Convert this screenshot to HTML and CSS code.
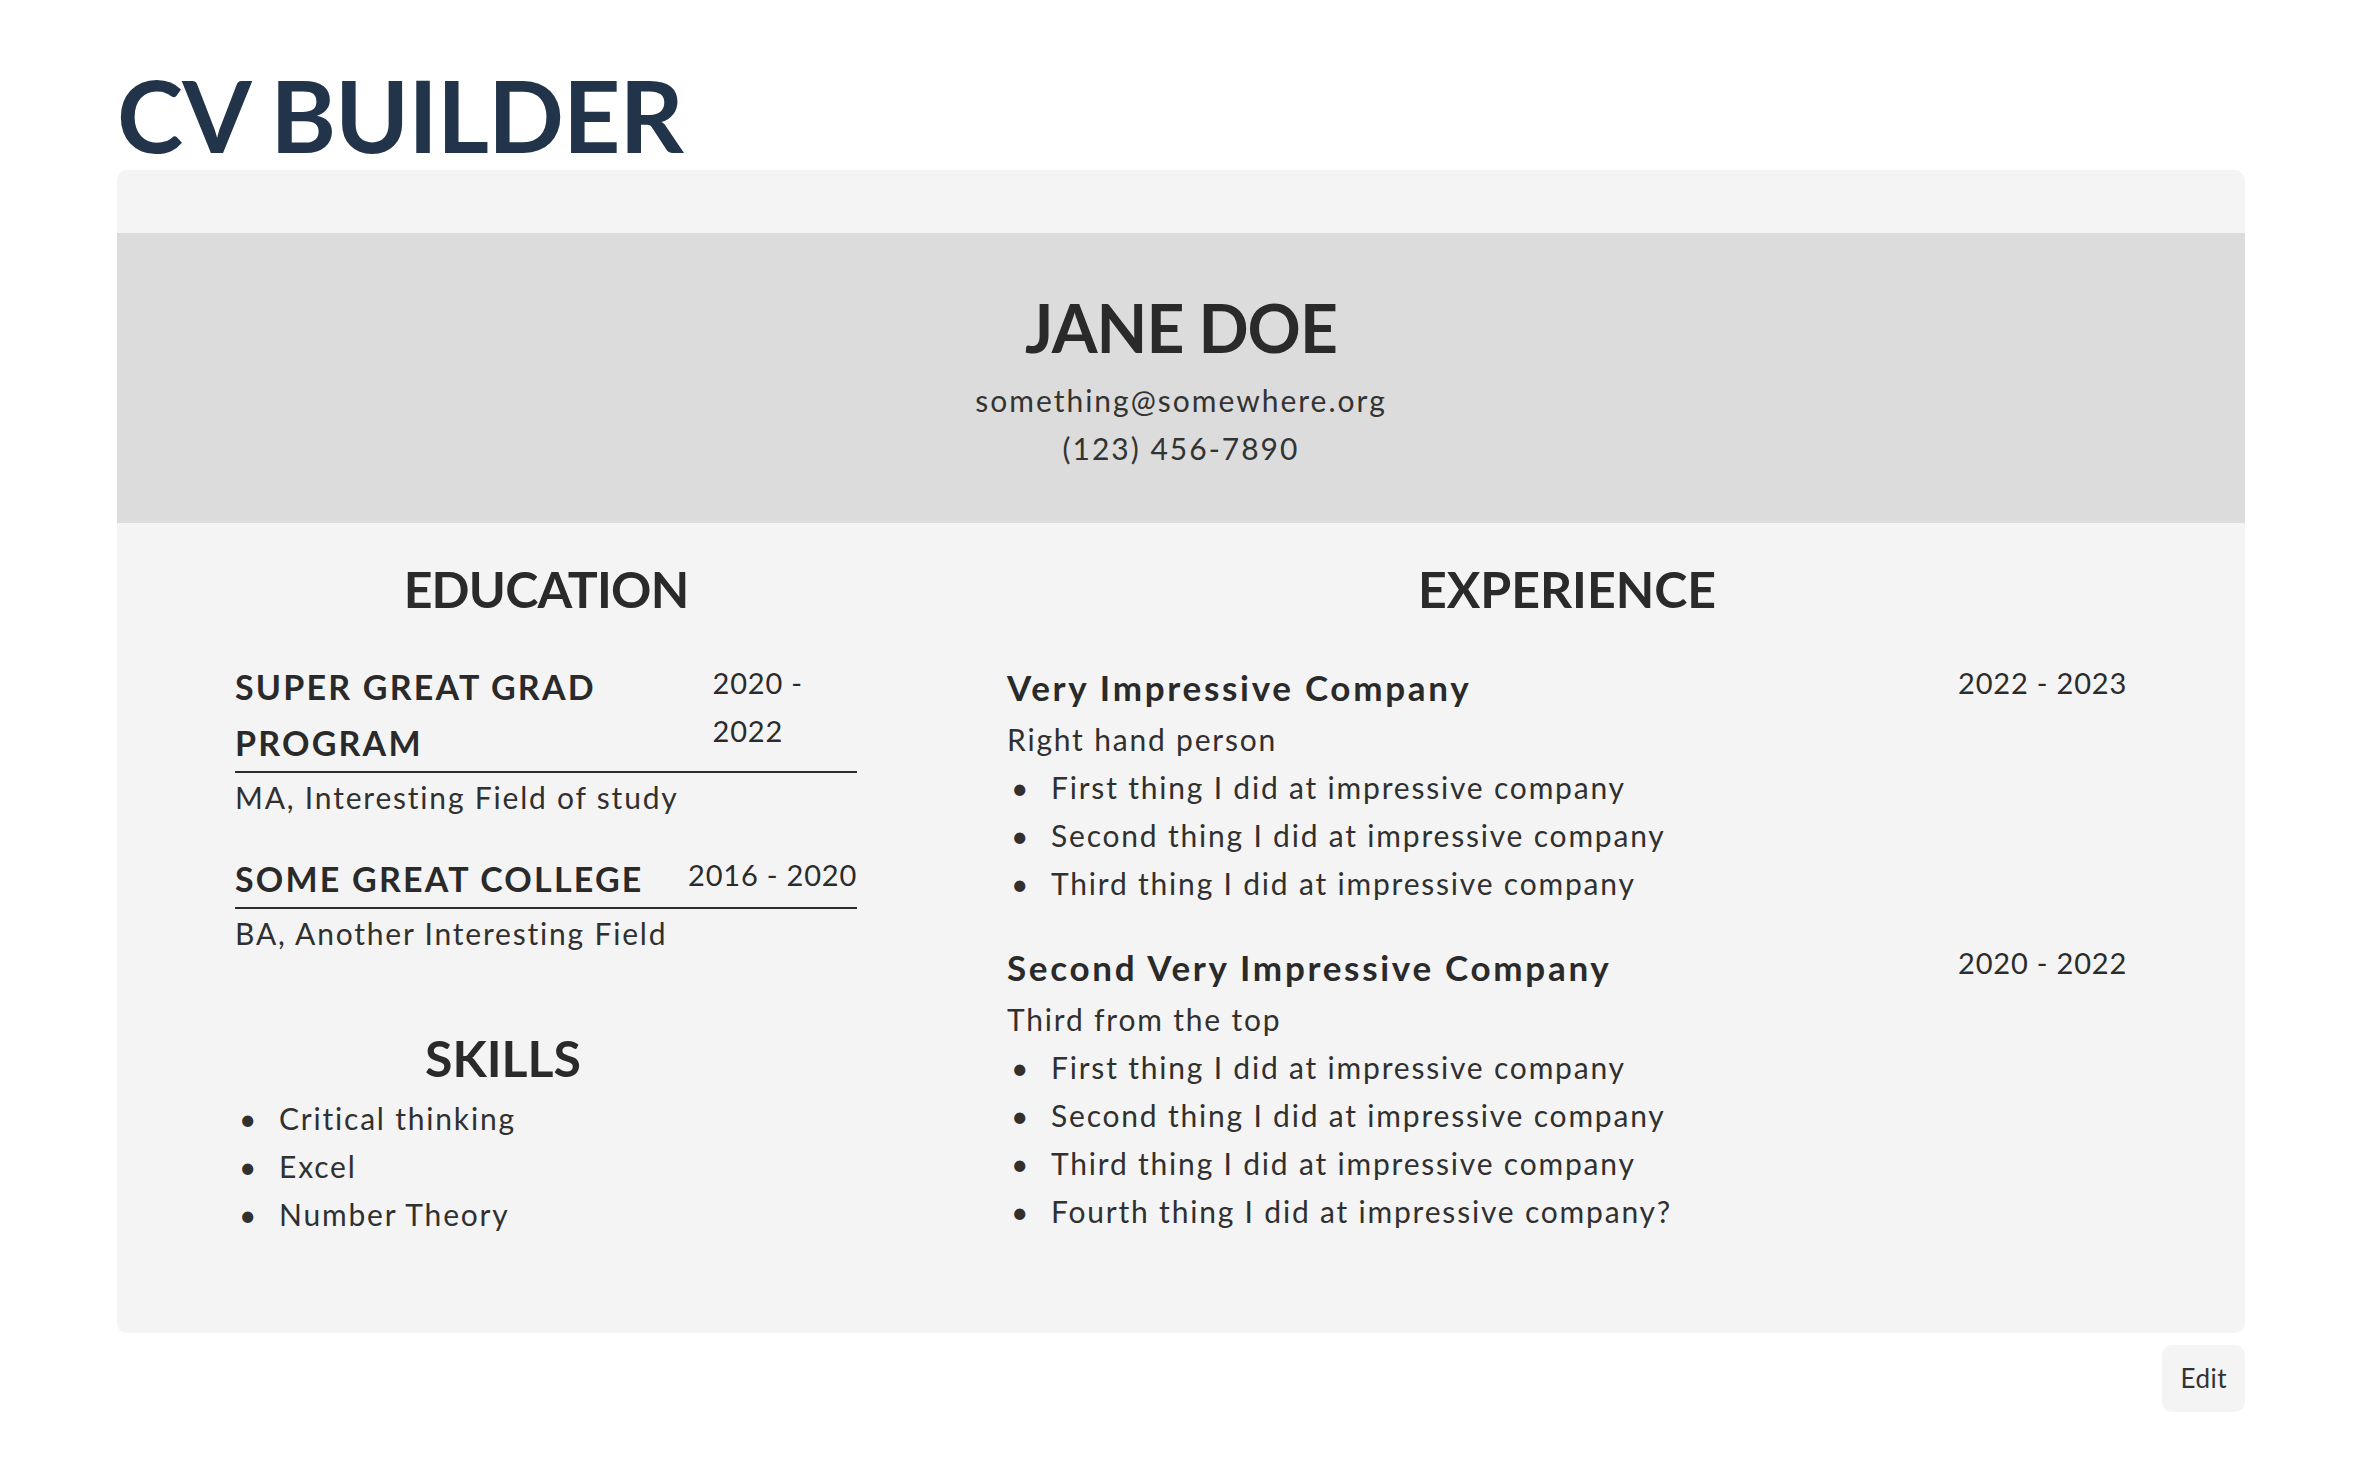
FILE: index.html
```html
<!doctype html>
<html>
<head>
<title>CV Builder</title>
<link rel="stylesheet" href="styles.css">
</head>
<body>
<h1 class="app-title">CV BUILDER</h1>
<div class="cv">
  <div class="cv-head">
    <h2 class="name">JANE DOE</h2>
    <p class="contact first">something@somewhere.org</p>
    <p class="contact">(123) 456-7890</p>
  </div>
  <div class="cv-body">
    <div class="col-left">
      <section class="education">
        <h3 class="sec-title">EDUCATION</h3>
        <div class="entry">
          <div class="entry-top lined">
            <span class="school">SUPER GREAT GRAD PROGRAM</span>
            <span class="dates">2020 - 2022</span>
          </div>
          <div class="sub">MA, Interesting Field of study</div>
        </div>
        <div class="entry next">
          <div class="entry-top lined">
            <span class="school">SOME GREAT COLLEGE</span>
            <span class="dates">2016 - 2020</span>
          </div>
          <div class="sub">BA, Another Interesting Field</div>
        </div>
      </section>
      <section class="skills">
        <h3 class="sec-title">SKILLS</h3>
        <ul class="list">
          <li>Critical thinking</li>
          <li>Excel</li>
          <li>Number Theory</li>
        </ul>
      </section>
    </div>
    <div class="col-right">
      <section class="experience">
        <h3 class="sec-title">EXPERIENCE</h3>
        <div class="entry">
          <div class="entry-top">
            <span class="company">Very Impressive Company</span>
            <span class="dates">2022 - 2023</span>
          </div>
          <div class="sub">Right hand person</div>
          <ul class="list">
            <li>First thing I did at impressive company</li>
            <li>Second thing I did at impressive company</li>
            <li>Third thing I did at impressive company</li>
          </ul>
        </div>
        <div class="entry next-job">
          <div class="entry-top">
            <span class="company">Second Very Impressive Company</span>
            <span class="dates">2020 - 2022</span>
          </div>
          <div class="sub">Third from the top</div>
          <ul class="list">
            <li>First thing I did at impressive company</li>
            <li>Second thing I did at impressive company</li>
            <li>Third thing I did at impressive company</li>
            <li>Fourth thing I did at impressive company?</li>
          </ul>
        </div>
      </section>
    </div>
  </div>
</div>
<div class="actions">
  <button class="edit">Edit</button>
</div>
</body>
</html>
```

FILE: styles.css
```css
body {
  margin: 0;
  padding: 0 117px 40px;
  background: #fff;
  color: #303030;
  font-family: Lato, "Open Sans", sans-serif;
}
.app-title {
  margin: 64px 0 6px;
  font-size: 100px;
  line-height: 1;
  font-weight: 700;
  letter-spacing: -1px;
  color: #22344a;
}
.cv {
  background: #f4f4f4;
  border-radius: 10px;
  padding-top: 63px;
}
.cv-head {
  background: #dcdcdc;
  text-align: center;
  padding: 55px 0 51px;
}
.name {
  margin: 0;
  font-size: 66px;
  line-height: 1.2;
  font-weight: 700;
  letter-spacing: -1px;
  color: #2a2a2a;
}
.contact {
  margin: 0;
  font-size: 30px;
  line-height: 48px;
  letter-spacing: 2px;
  color: #333;
}
.contact.first {
  margin-top: 9px;
}
.cv-body {
  display: grid;
  grid-template-columns: 622px 1fr;
  gap: 150px;
  padding: 36px 118px 95px;
}
.sec-title {
  margin: 0;
  font-size: 50px;
  line-height: 60px;
  font-weight: 700;
  text-align: center;
  color: #2a2a2a;
}
.education .sec-title {
  letter-spacing: -0.8px;
}
.entry {
  margin-top: 40px;
}
.entry.next {
  margin-top: 30px;
}
.entry.next-job {
  margin-top: 32px;
}
.entry-top {
  display: flex;
  justify-content: space-between;
  align-items: flex-start;
}
.entry-top.lined {
  border-bottom: 2px solid #2b2b2b;
}
.school,
.company {
  font-size: 34px;
  line-height: 56px;
  font-weight: 700;
  color: #2a2a2a;
}
.school {
  letter-spacing: 2.2px;
}
.company {
  font-size: 35px;
  letter-spacing: 2.7px;
}
.dates {
  font-size: 29px;
  line-height: 48px;
  letter-spacing: 0.8px;
  color: #2b2b2b;
}
.sub {
  font-size: 30px;
  line-height: 48px;
  letter-spacing: 1.8px;
}
.skills {
  width: 536px;
  margin-top: 71px;
}
.list {
  margin: 0;
  padding: 0;
  list-style: none;
  font-size: 30px;
  line-height: 48px;
  letter-spacing: 1.8px;
}
.list li::before {
  content: "\2022";
  display: inline-block;
  width: 44px;
  padding-left: 4px;
  box-sizing: border-box;
  letter-spacing: 0;
}
.skills .list {
  margin-top: 6px;
}
.actions {
  display: flex;
  justify-content: flex-end;
  margin-top: 12px;
}
.edit {
  font-family: Lato, "Open Sans", sans-serif;
  font-size: 26px;
  line-height: 31px;
  letter-spacing: 0.5px;
  color: #333;
  background: #f4f4f4;
  border: none;
  border-radius: 10px;
  padding: 18px 18px;
  cursor: pointer;
}
```
